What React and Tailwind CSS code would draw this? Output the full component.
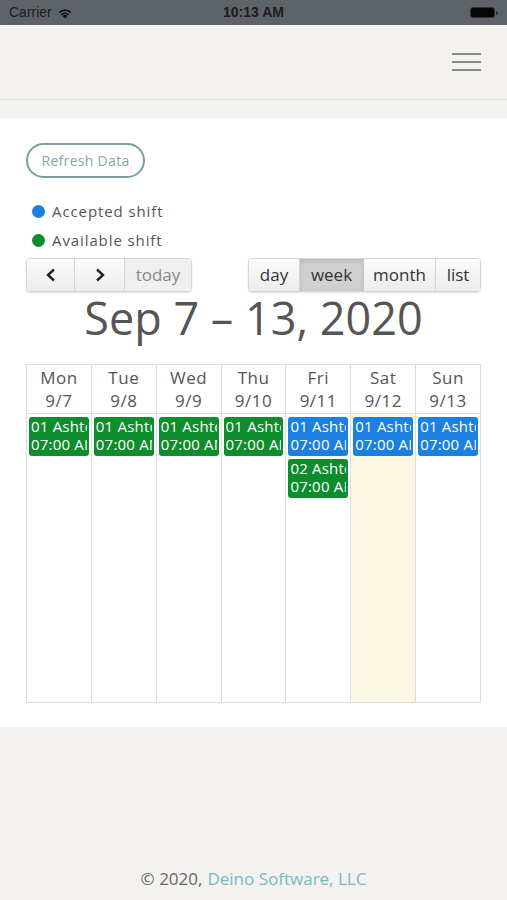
import React from "react";

const days = [
  { d: "Mon", n: "9/7", ev: [["01 Ashton", "g"]] },
  { d: "Tue", n: "9/8", ev: [["01 Ashton", "g"]] },
  { d: "Wed", n: "9/9", ev: [["01 Ashton", "g"]] },
  { d: "Thu", n: "9/10", ev: [["01 Ashton", "g"]] },
  { d: "Fri", n: "9/11", ev: [["01 Ashton", "b"], ["02 Ashton", "g"]] },
  { d: "Sat", n: "9/12", ev: [["01 Ashton", "b"]], today: true },
  { d: "Sun", n: "9/13", ev: [["01 Ashton", "b"]] },
];

function Event({ title, color }) {
  return (
    <div
      className={
        "mx-[2px] mb-[3px] h-[39px] overflow-hidden whitespace-nowrap rounded-[3px] px-[2px] text-[15px] leading-[18px] tracking-[0.2px] text-white " +
        (color === "b" ? "bg-[#1b80e0]" : "bg-[#0e8d2c]")
      }
    >
      <div className="overflow-hidden">{title}</div>
      <div className="overflow-hidden">07:00 AM</div>
    </div>
  );
}

export default function App() {
  return (
    <div className="flex min-h-[900px] w-[507px] flex-col bg-[#f3f2ef] font-['Open_Sans',sans-serif] text-[#555]">
      {/* status bar */}
      <div className="flex h-[25px] items-center justify-between bg-[#5e636a] px-[9px] text-[14px] text-[#1c1c1c]">
        <div className="flex w-[120px] items-center gap-[5px] font-['Liberation_Sans',sans-serif]">
          <span>Carrier</span>
          <svg width="16" height="12" viewBox="0 0 16 12">
            <path d="M8 11.5 L5.6 9 A3.4 3.4 0 0 1 10.4 9 Z" fill="#111" />
            <path d="M3.8 7.2 A6 6 0 0 1 12.2 7.2 L11 8.4 A4.3 4.3 0 0 0 5 8.4 Z" fill="#111" />
            <path d="M1.5 5 A9.2 9.2 0 0 1 14.5 5 L13.3 6.2 A7.5 7.5 0 0 0 2.7 6.2 Z" fill="#111" />
          </svg>
        </div>
        <span className="font-['Liberation_Sans',sans-serif] font-bold">10:13 AM</span>
        <div className="flex w-[120px] justify-end">
          <div className="flex items-center">
            <div className="h-[11px] w-[25px] rounded-[3px] border border-[#333] bg-[#050505]" />
            <div className="ml-[1px] h-[4px] w-[2px] rounded-r bg-[#333]" />
          </div>
        </div>
      </div>

      {/* header */}
      <div className="flex h-[75px] items-center justify-end border-b border-[#dcdcda] bg-[#f3f2ef] pr-[26px]">
        <div className="flex w-[29px] flex-col gap-[6px]">
          <div className="h-[2px] bg-[#8a8a8a]" />
          <div className="h-[2px] bg-[#8a8a8a]" />
          <div className="h-[2px] bg-[#8a8a8a]" />
        </div>
      </div>
      <div className="h-[18px] bg-[#f3f2ef]" />

      {/* main */}
      <div className="bg-white px-[26px] pt-[25px] pb-[24px]">
        <button className="h-[35px] w-[119px] rounded-full border-2 border-[#77a09e] text-[14px] tracking-[0.3px] text-[#83a8a6]">
          Refresh Data
        </button>

        <div className="mt-[23px] flex flex-col gap-[9px] text-[15px] tracking-[0.9px] text-[#555]">
          <div className="flex h-[20px] items-center gap-[7px] pl-[6px]">
            <span className="h-[13px] w-[13px] rounded-full bg-[#1b80e0]" />
            <span>Accepted shift</span>
          </div>
          <div className="flex h-[20px] items-center gap-[7px] pl-[6px]">
            <span className="h-[13px] w-[13px] rounded-full bg-[#0e8d2c]" />
            <span>Available shift</span>
          </div>
        </div>

        {/* toolbar */}
        <div className="mt-[8px] flex items-center justify-between">
          <div className="flex h-[34px] overflow-hidden rounded-[4px] border border-[#d4d4d4] shadow-[0_1px_2px_rgba(0,0,0,0.12)]">
            <button className="flex w-[48px] items-center justify-center border-r border-[#d4d4d4] bg-gradient-to-b from-[#fbfbfb] to-[#ececec]">
              <svg width="12" height="14" viewBox="0 0 12 14"><path d="M9 1.5 L3 7 L9 12.5" stroke="#222" strokeWidth="2.4" fill="none" /></svg>
            </button>
            <button className="flex w-[50px] items-center justify-center border-r border-[#d4d4d4] bg-gradient-to-b from-[#fbfbfb] to-[#ececec]">
              <svg width="12" height="14" viewBox="0 0 12 14"><path d="M3 1.5 L9 7 L3 12.5" stroke="#222" strokeWidth="2.4" fill="none" /></svg>
            </button>
            <button className="w-[66px] bg-[#efefef] text-[17px] text-[#8a8a8a]">today</button>
          </div>
          <div className="flex h-[34px] overflow-hidden rounded-[4px] border border-[#d4d4d4] text-[17px] text-[#333] shadow-[0_1px_2px_rgba(0,0,0,0.12)]">
            <button className="w-[51px] border-r border-[#d4d4d4] bg-gradient-to-b from-[#fbfbfb] to-[#ececec]">day</button>
            <button className="w-[64px] border-r border-[#c4c4c4] bg-[#d0d0d0] shadow-[inset_0_2px_4px_rgba(0,0,0,0.12)]">week</button>
            <button className="w-[72px] border-r border-[#d4d4d4] bg-gradient-to-b from-[#fbfbfb] to-[#ececec]">month</button>
            <button className="w-[44px] bg-gradient-to-b from-[#fbfbfb] to-[#ececec]">list</button>
          </div>
        </div>

        <h1 className="mt-[1px] text-center text-[45px] leading-[50px] text-[#555]">Sep 7 – 13, 2020</h1>

        {/* calendar */}
        <div className="mt-[21px] grid grid-cols-7 border-l border-t border-[#dddddd]">
          {days.map((day) => (
            <div key={day.d} className="flex flex-col border-r border-b border-[#dddddd]">
              <div className="flex h-[49px] flex-col items-center justify-center border-b border-[#dddddd] text-[17px] leading-[23px] tracking-[0.5px] text-[#555]">
                <span>{day.d}</span>
                <span>{day.n}</span>
              </div>
              <div className={"h-[288px] overflow-hidden pt-[3px] " + (day.today ? "bg-[#fcf8e3]" : "bg-white")}>
                {day.ev.map(([t, c], i) => (
                  <Event key={i} title={t} color={c} />
                ))}
              </div>
            </div>
          ))}
        </div>
      </div>

      {/* footer */}
      <div className="flex flex-1 items-end justify-center pb-[9px] text-[17px]">
        <span className="text-[#666]">© 2020,</span>
        <span className="ml-[5px] text-[#77b9cc]">Deino Software, LLC</span>
      </div>
    </div>
  );
}
